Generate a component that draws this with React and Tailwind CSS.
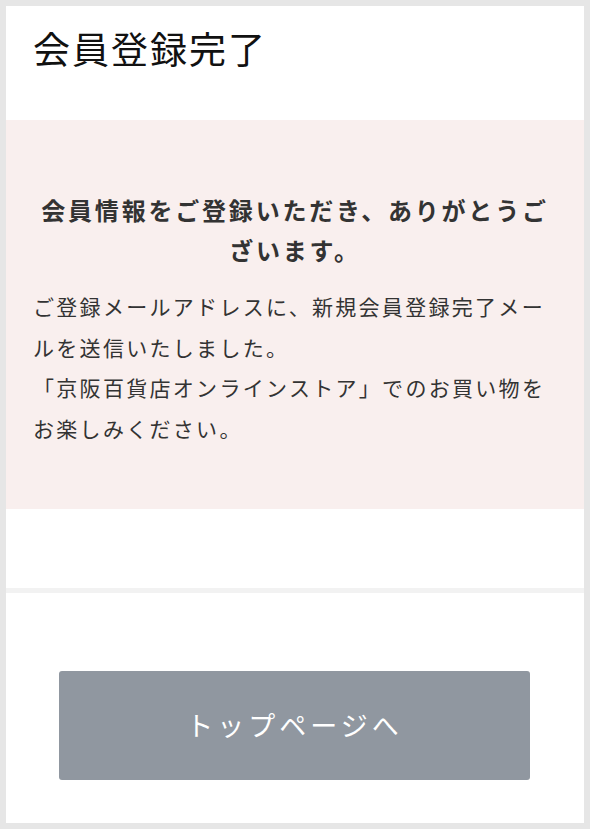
export default function App() {
  const font = { fontFamily: '"Noto Sans CJK JP", "Noto Sans", sans-serif' };

  return (
    <div className="w-[590px] h-[829px] bg-[#e6e6e6] p-[6px]" style={font}>
      <div className="bg-white h-full flex flex-col">
        {/* Page title */}
        <div className="h-[114px] px-[27px] pt-[24px]">
          <h1 className="text-[37px] leading-[37px] font-normal tracking-[2px] text-[#111]">
            会員登録完了
          </h1>
        </div>

        {/* Message box */}
        <div className="h-[389px] bg-[#f9efee] px-[27px] pt-[70px]">
          <p className="text-center text-[24px] leading-[40px] font-bold tracking-[2.8px] text-[#333]">
            会員情報をご登録いただき、ありがとうご
            <br />
            ざいます。
          </p>
          <p className="mt-[16px] text-[21px] leading-[40.5px] tracking-[2.3px] text-[#333] whitespace-nowrap">
            ご登録メールアドレスに、新規会員登録完了メー
            <br />
            ルを送信いたしました。
            <br />
            「京阪百貨店オンラインストア」でのお買い物を
            <br />
            お楽しみください。
          </p>
        </div>

        <div className="h-[79px]" />
        <div className="h-[5px] bg-[#f2f2f2]" />

        {/* Button */}
        <div className="flex-1 pt-[78px] pl-[53px] pr-[54px]">
          <button className="w-full h-[109px] rounded-[3px] bg-[#9097a0] text-white text-[27px] font-normal tracking-[4px] flex items-center justify-center">
            トップページへ
          </button>
        </div>
      </div>
    </div>
  );
}
